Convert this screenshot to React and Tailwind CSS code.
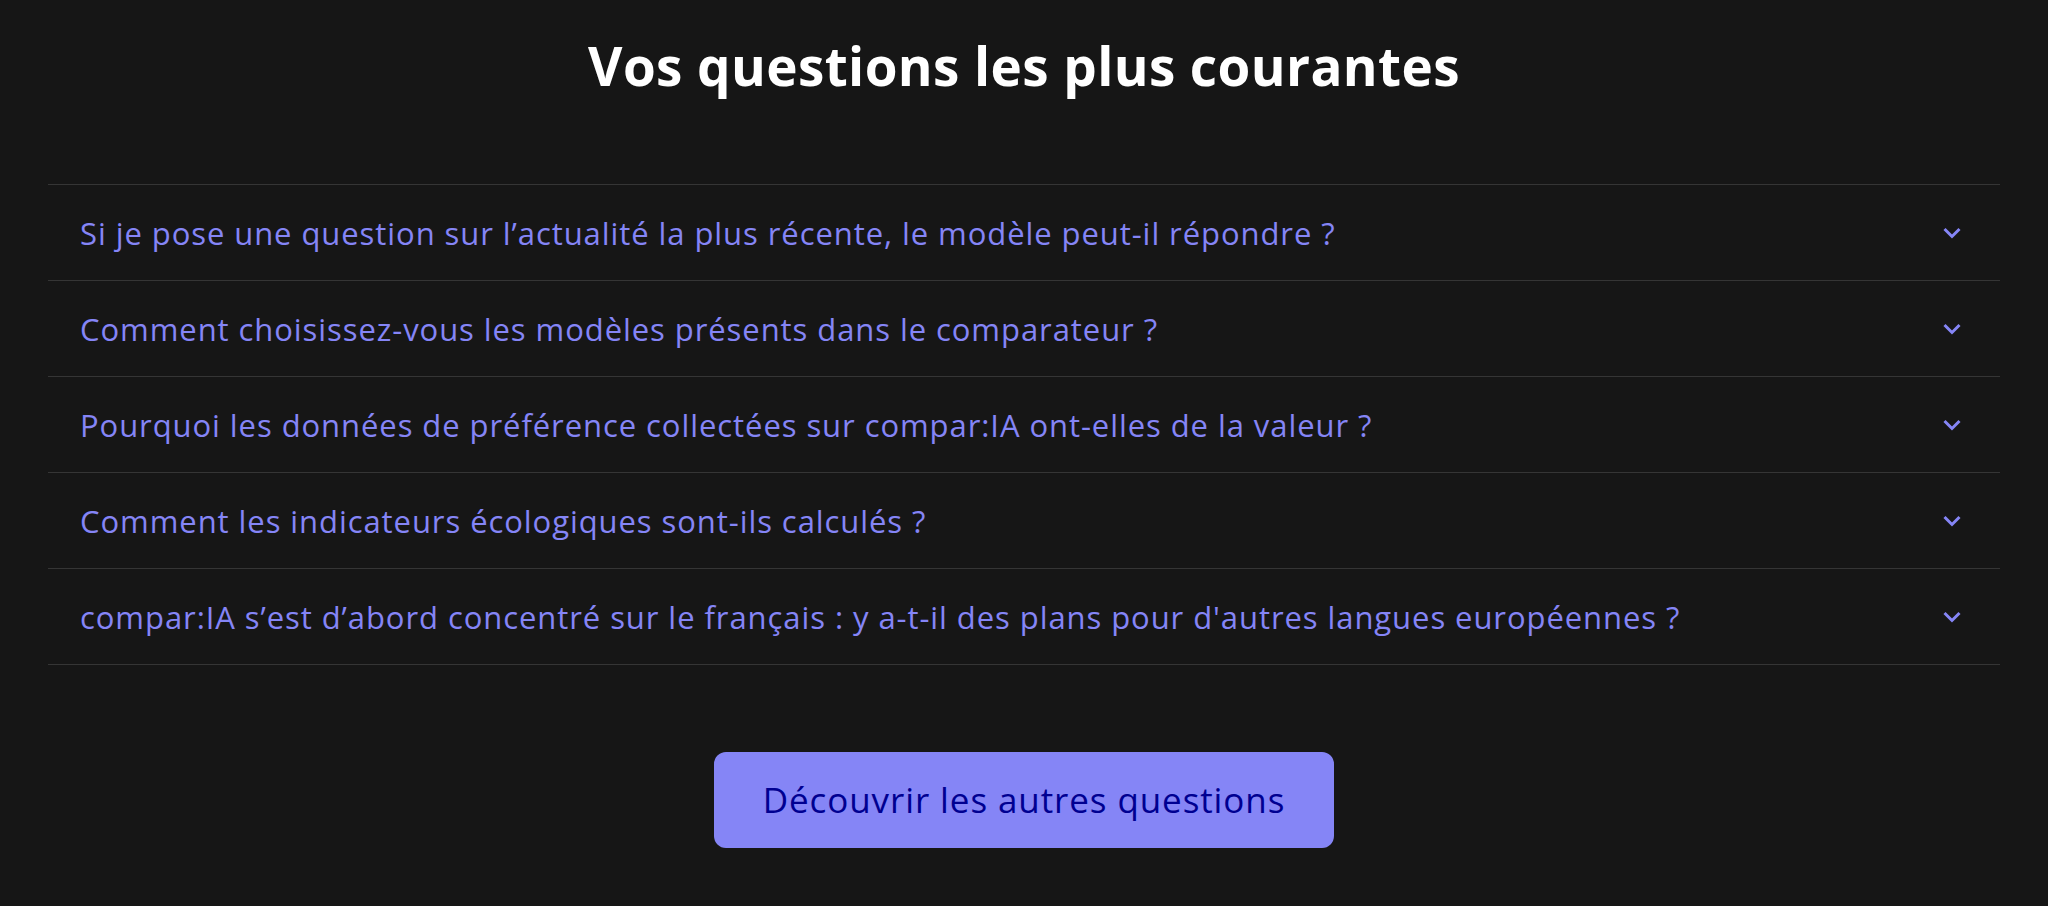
import React from "react";

const questions = [
  "Si je pose une question sur l’actualité la plus récente, le modèle peut-il répondre\u00a0?",
  "Comment choisissez-vous les modèles présents dans le comparateur\u00a0?",
  "Pourquoi les données de préférence collectées sur compar:IA ont-elles de la valeur\u00a0?",
  "Comment les indicateurs écologiques sont-ils calculés\u00a0?",
  "compar:IA s’est d’abord concentré sur le français : y a-t-il des plans pour d'autres langues européennes\u00a0?",
];

function Chevron() {
  return (
    <svg width="18" height="12" viewBox="0 0 18 12" fill="none" className="shrink-0">
      <polyline points="1.5,2 9,9.5 16.5,2" stroke="#8585f6" strokeWidth="3" strokeLinecap="butt" strokeLinejoin="miter" />
    </svg>
  );
}

export default function App() {
  return (
    <div
      className="w-full min-h-[906px] bg-[#161616] px-[48px] pt-[34px] pb-[58px]"
      style={{ fontFamily: "'Open Sans', 'Noto Sans', sans-serif" }}
    >
      <h2 className="text-center text-white font-bold text-[53px] leading-[64px] tracking-[0.4px]">
        Vos questions les plus courantes
      </h2>
      <div className="mt-[86px] border-t border-[#353535]">
        {questions.map((q) => (
          <div
            key={q}
            className="flex h-[96px] items-center justify-between border-b border-[#353535] pl-[32px] pr-[39px]"
          >
            <span className="text-[#8585f6] text-[31px] leading-[48px] tracking-[0.93px]">{q}</span>
            <Chevron />
          </div>
        ))}
      </div>
      <div className="mt-[87px] flex justify-center">
        <button className="h-[96px] w-[620px] rounded-[12px] bg-[#8585f6] text-[#000091] text-[35px] font-medium tracking-[0.9px] flex items-center justify-center">
          Découvrir les autres questions
        </button>
      </div>
    </div>
  );
}
